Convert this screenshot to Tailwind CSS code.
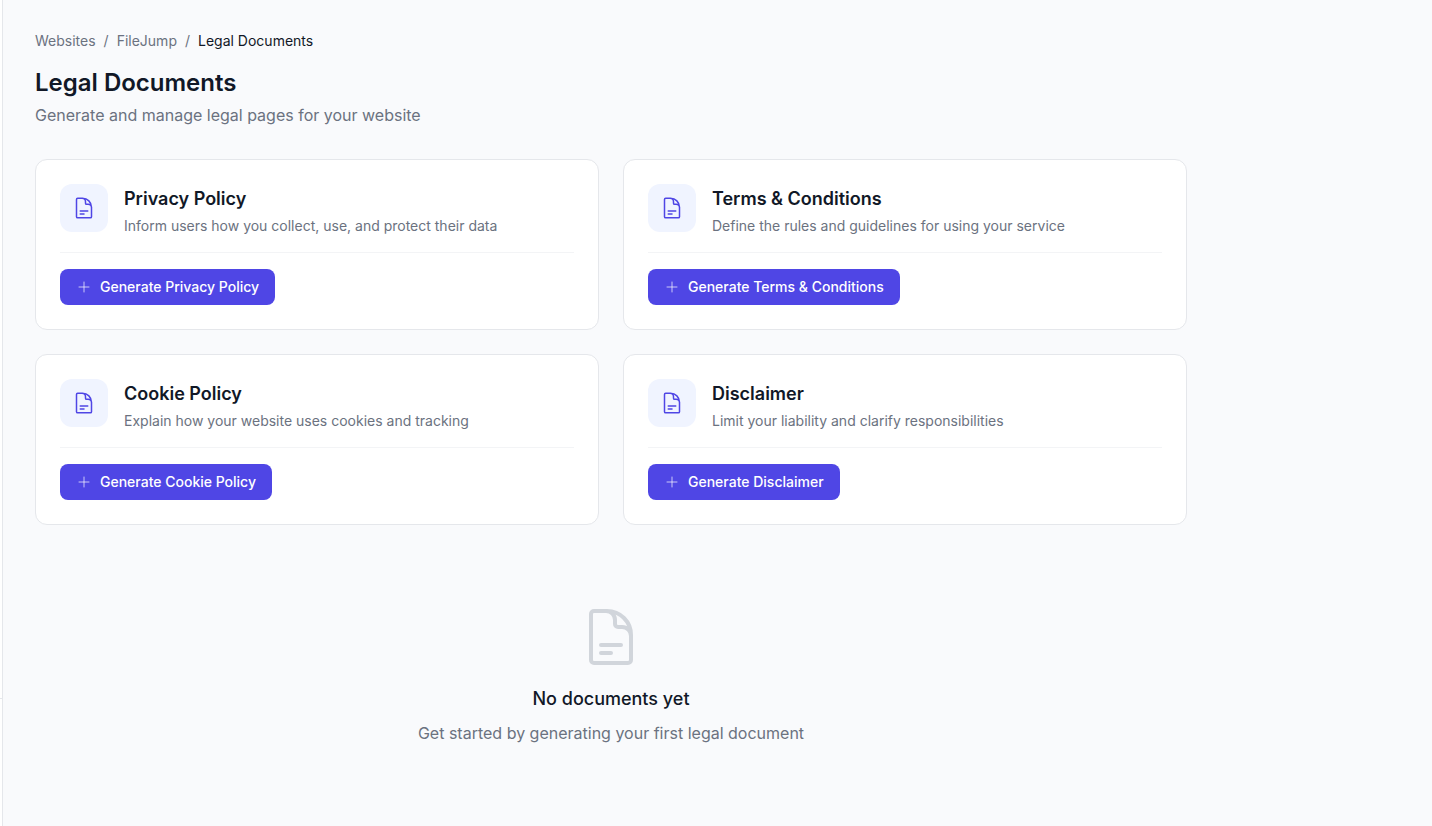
<!DOCTYPE html>
<html lang="en">
<head>
<meta charset="utf-8">
<title>Legal Documents</title>
<script src="https://cdn.jsdelivr.net/npm/@tailwindcss/browser@4"></script>
</head>
<body class="bg-[#f9fafc] font-['Inter',sans-serif] text-[#111827]">
<div class="flex h-[826px] overflow-hidden">
  <aside class="relative w-[3px] shrink-0 border-r border-[#e5e7eb] bg-white">
    <div class="absolute left-0 top-[698px] h-px w-[2px] bg-[#e5e7eb]"></div>
  </aside>
  <main class="flex-1 pl-8 pt-8">
    <div class="max-w-6xl">
      <nav class="flex h-[18px] items-center gap-2 text-sm text-[#6b7280]">
        <span>Websites</span><span>/</span><span>FileJump</span><span>/</span><span class="text-[#111827]">Legal Documents</span>
      </nav>
      <h1 class="mt-[17px] text-2xl font-semibold leading-8">Legal Documents</h1>
      <p class="mt-1 text-base leading-6 text-[#6b7280]">Generate and manage legal pages for your website</p>

      <div class="mt-8 grid grid-cols-2 gap-6">
        <section class="rounded-xl border border-[#e5e7eb] bg-white p-6">
          <div class="flex items-start gap-4 border-b border-[#f3f4f6] pb-4">
            <div class="flex h-12 w-12 shrink-0 items-center justify-center rounded-xl bg-[#f0f4ff]">
              <svg class="h-6 w-6 text-[#4f46e5]" fill="none" viewBox="0 0 24 24" stroke-width="1.5" stroke="currentColor"><path stroke-linecap="round" stroke-linejoin="round" d="M19.5 14.25v-2.625a3.375 3.375 0 0 0-3.375-3.375h-1.5A1.125 1.125 0 0 1 13.5 7.125v-1.5a3.375 3.375 0 0 0-3.375-3.375H8.25m0 12.75h7.5m-7.5 3H12M10.5 2.25H5.625c-.621 0-1.125.504-1.125 1.125v17.25c0 .621.504 1.125 1.125 1.125h12.75c.621 0 1.125-.504 1.125-1.125V11.25a9 9 0 0 0-9-9Z"/></svg>
            </div>
            <div>
              <h2 class="pt-px text-lg font-semibold leading-7">Privacy Policy</h2>
              <p class="mt-[3px] text-sm leading-5 text-[#6b7280]">Inform users how you collect, use, and protect their data</p>
            </div>
          </div>
          <button class="mt-4 flex h-9 items-center gap-2 rounded-lg bg-[#4f46e5] px-4 text-sm font-medium text-white">
            <svg class="h-4 w-4 text-white/70" fill="none" viewBox="0 0 24 24" stroke-width="1.5" stroke="currentColor"><path stroke-linecap="round" stroke-linejoin="round" d="M12 4.5v15m7.5-7.5h-15"/></svg>
            Generate Privacy Policy
          </button>
        </section>

        <section class="rounded-xl border border-[#e5e7eb] bg-white p-6">
          <div class="flex items-start gap-4 border-b border-[#f3f4f6] pb-4">
            <div class="flex h-12 w-12 shrink-0 items-center justify-center rounded-xl bg-[#f0f4ff]">
              <svg class="h-6 w-6 text-[#4f46e5]" fill="none" viewBox="0 0 24 24" stroke-width="1.5" stroke="currentColor"><path stroke-linecap="round" stroke-linejoin="round" d="M19.5 14.25v-2.625a3.375 3.375 0 0 0-3.375-3.375h-1.5A1.125 1.125 0 0 1 13.5 7.125v-1.5a3.375 3.375 0 0 0-3.375-3.375H8.25m0 12.75h7.5m-7.5 3H12M10.5 2.25H5.625c-.621 0-1.125.504-1.125 1.125v17.25c0 .621.504 1.125 1.125 1.125h12.75c.621 0 1.125-.504 1.125-1.125V11.25a9 9 0 0 0-9-9Z"/></svg>
            </div>
            <div>
              <h2 class="pt-px text-lg font-semibold leading-7">Terms &amp; Conditions</h2>
              <p class="mt-[3px] text-sm leading-5 text-[#6b7280]">Define the rules and guidelines for using your service</p>
            </div>
          </div>
          <button class="mt-4 flex h-9 items-center gap-2 rounded-lg bg-[#4f46e5] px-4 text-sm font-medium text-white">
            <svg class="h-4 w-4 text-white/70" fill="none" viewBox="0 0 24 24" stroke-width="1.5" stroke="currentColor"><path stroke-linecap="round" stroke-linejoin="round" d="M12 4.5v15m7.5-7.5h-15"/></svg>
            Generate Terms &amp; Conditions
          </button>
        </section>

        <section class="rounded-xl border border-[#e5e7eb] bg-white p-6">
          <div class="flex items-start gap-4 border-b border-[#f3f4f6] pb-4">
            <div class="flex h-12 w-12 shrink-0 items-center justify-center rounded-xl bg-[#f0f4ff]">
              <svg class="h-6 w-6 text-[#4f46e5]" fill="none" viewBox="0 0 24 24" stroke-width="1.5" stroke="currentColor"><path stroke-linecap="round" stroke-linejoin="round" d="M19.5 14.25v-2.625a3.375 3.375 0 0 0-3.375-3.375h-1.5A1.125 1.125 0 0 1 13.5 7.125v-1.5a3.375 3.375 0 0 0-3.375-3.375H8.25m0 12.75h7.5m-7.5 3H12M10.5 2.25H5.625c-.621 0-1.125.504-1.125 1.125v17.25c0 .621.504 1.125 1.125 1.125h12.75c.621 0 1.125-.504 1.125-1.125V11.25a9 9 0 0 0-9-9Z"/></svg>
            </div>
            <div>
              <h2 class="pt-px text-lg font-semibold leading-7">Cookie Policy</h2>
              <p class="mt-[3px] text-sm leading-5 text-[#6b7280]">Explain how your website uses cookies and tracking</p>
            </div>
          </div>
          <button class="mt-4 flex h-9 items-center gap-2 rounded-lg bg-[#4f46e5] px-4 text-sm font-medium text-white">
            <svg class="h-4 w-4 text-white/70" fill="none" viewBox="0 0 24 24" stroke-width="1.5" stroke="currentColor"><path stroke-linecap="round" stroke-linejoin="round" d="M12 4.5v15m7.5-7.5h-15"/></svg>
            Generate Cookie Policy
          </button>
        </section>

        <section class="rounded-xl border border-[#e5e7eb] bg-white p-6">
          <div class="flex items-start gap-4 border-b border-[#f3f4f6] pb-4">
            <div class="flex h-12 w-12 shrink-0 items-center justify-center rounded-xl bg-[#f0f4ff]">
              <svg class="h-6 w-6 text-[#4f46e5]" fill="none" viewBox="0 0 24 24" stroke-width="1.5" stroke="currentColor"><path stroke-linecap="round" stroke-linejoin="round" d="M19.5 14.25v-2.625a3.375 3.375 0 0 0-3.375-3.375h-1.5A1.125 1.125 0 0 1 13.5 7.125v-1.5a3.375 3.375 0 0 0-3.375-3.375H8.25m0 12.75h7.5m-7.5 3H12M10.5 2.25H5.625c-.621 0-1.125.504-1.125 1.125v17.25c0 .621.504 1.125 1.125 1.125h12.75c.621 0 1.125-.504 1.125-1.125V11.25a9 9 0 0 0-9-9Z"/></svg>
            </div>
            <div>
              <h2 class="pt-px text-lg font-semibold leading-7">Disclaimer</h2>
              <p class="mt-[3px] text-sm leading-5 text-[#6b7280]">Limit your liability and clarify responsibilities</p>
            </div>
          </div>
          <button class="mt-4 flex h-9 items-center gap-2 rounded-lg bg-[#4f46e5] px-4 text-sm font-medium text-white">
            <svg class="h-4 w-4 text-white/70" fill="none" viewBox="0 0 24 24" stroke-width="1.5" stroke="currentColor"><path stroke-linecap="round" stroke-linejoin="round" d="M12 4.5v15m7.5-7.5h-15"/></svg>
            Generate Disclaimer
          </button>
        </section>
      </div>

      <div class="mt-20 flex flex-col items-center text-center">
        <svg class="h-16 w-16 text-[#d1d5db]" fill="none" viewBox="0 0 24 24" stroke-width="1.5" stroke="currentColor"><path stroke-linecap="round" stroke-linejoin="round" d="M19.5 14.25v-2.625a3.375 3.375 0 0 0-3.375-3.375h-1.5A1.125 1.125 0 0 1 13.5 7.125v-1.5a3.375 3.375 0 0 0-3.375-3.375H8.25m0 12.75h7.5m-7.5 3H12M10.5 2.25H5.625c-.621 0-1.125.504-1.125 1.125v17.25c0 .621.504 1.125 1.125 1.125h12.75c.621 0 1.125-.504 1.125-1.125V11.25a9 9 0 0 0-9-9Z"/></svg>
        <h3 class="mt-4 text-lg font-medium leading-7">No documents yet</h3>
        <p class="mt-2 text-base leading-6 text-[#6b7280]">Get started by generating your first legal document</p>
      </div>
    </div>
  </main>
</div>
</body>
</html>
